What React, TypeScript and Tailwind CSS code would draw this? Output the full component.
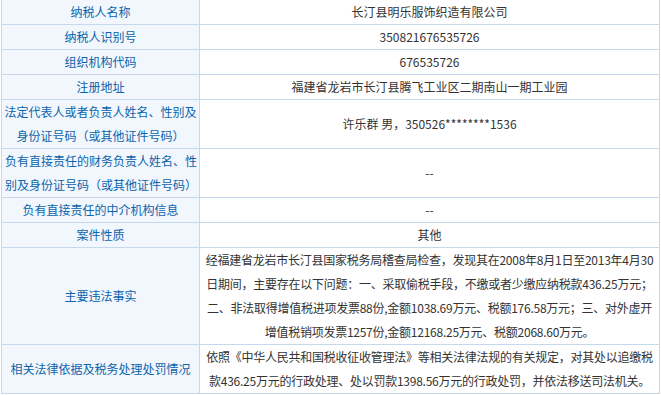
const rows: { label: string[]; value: string[]; h: string; leftAlign?: boolean; tight?: boolean }[] = [
  { label: ['纳税人名称'], value: ['长汀县明乐服饰织造有限公司'], h: 'h-[25px]' },
  { label: ['纳税人识别号'], value: ['350821676535726'], h: 'h-[25px]' },
  { label: ['组织机构代码'], value: ['676535726'], h: 'h-[25px]' },
  { label: ['注册地址'], value: ['福建省龙岩市长汀县腾飞工业区二期南山一期工业园'], h: 'h-[25px]' },
  {
    label: ['法定代表人或者负责人姓名、性别及', '身份证号码（或其他证件号码）'],
    value: ['许乐群 男，350526********1536'],
    h: 'h-[49px]',
  },
  {
    label: ['负有直接责任的财务负责人姓名、性', '别及身份证号码（或其他证件号码）'],
    value: ['--'],
    h: 'h-[49px]',
    leftAlign: true,
  },
  { label: ['负有直接责任的中介机构信息'], value: ['--'], h: 'h-[25px]' },
  { label: ['案件性质'], value: ['其他'], h: 'h-[25px]' },
  {
    label: ['主要违法事实'],
    value: [
      '经福建省龙岩市长汀县国家税务局稽查局检查，发现其在2008年8月1日至2013年4月30',
      '日期间，主要存在以下问题：一、采取偷税手段，不缴或者少缴应纳税款436.25万元；',
      '二、非法取得增值税进项发票88份,金额1038.69万元、税额176.58万元；三、对外虚开',
      '增值税销项发票1257份,金额12168.25万元、税额2068.60万元。',
    ],
    h: 'h-[97px]',
    tight: true,
  },
  {
    label: ['相关法律依据及税务处理处罚情况'],
    value: [
      '依照《中华人民共和国税收征收管理法》等相关法律法规的有关规定，对其处以追缴税',
      '款436.25万元的行政处理、处以罚款1398.56万元的行政处罚，并依法移送司法机关。',
    ],
    h: 'h-[49px]',
    tight: true,
  },
]

export default function App() {
  return (
    <div className="w-[661px] h-[395px] bg-white overflow-hidden font-['Noto_Sans_CJK_SC',sans-serif] text-[12px] leading-[24px]">
      <div className="ml-[1px] w-[659px] border-l border-r border-[#c6d9ec]">
        {rows.map((row, i) => (
          <div key={i} className={`flex border-b border-[#c6d9ec] ${row.h}`}>
            <div
              className={`w-[198px] shrink-0 flex flex-col justify-center bg-[#f1f7fc] border-r border-[#c6d9ec] text-[#0b63ad] ${
                row.leftAlign ? 'items-start pl-[3px]' : 'items-center'
              }`}
            >
              {row.label.map((t, j) => (
                <div key={j} className="whitespace-nowrap">{t}</div>
              ))}
            </div>
            <div
              className={`flex-1 flex flex-col justify-center items-center text-[#333333] overflow-hidden ${
                row.tight ? 'tracking-[-0.25px]' : ''
              }`}
            >
              {row.value.map((t, j) => (
                <div key={j} className="whitespace-nowrap">{t}</div>
              ))}
            </div>
          </div>
        ))}
      </div>
    </div>
  )
}
